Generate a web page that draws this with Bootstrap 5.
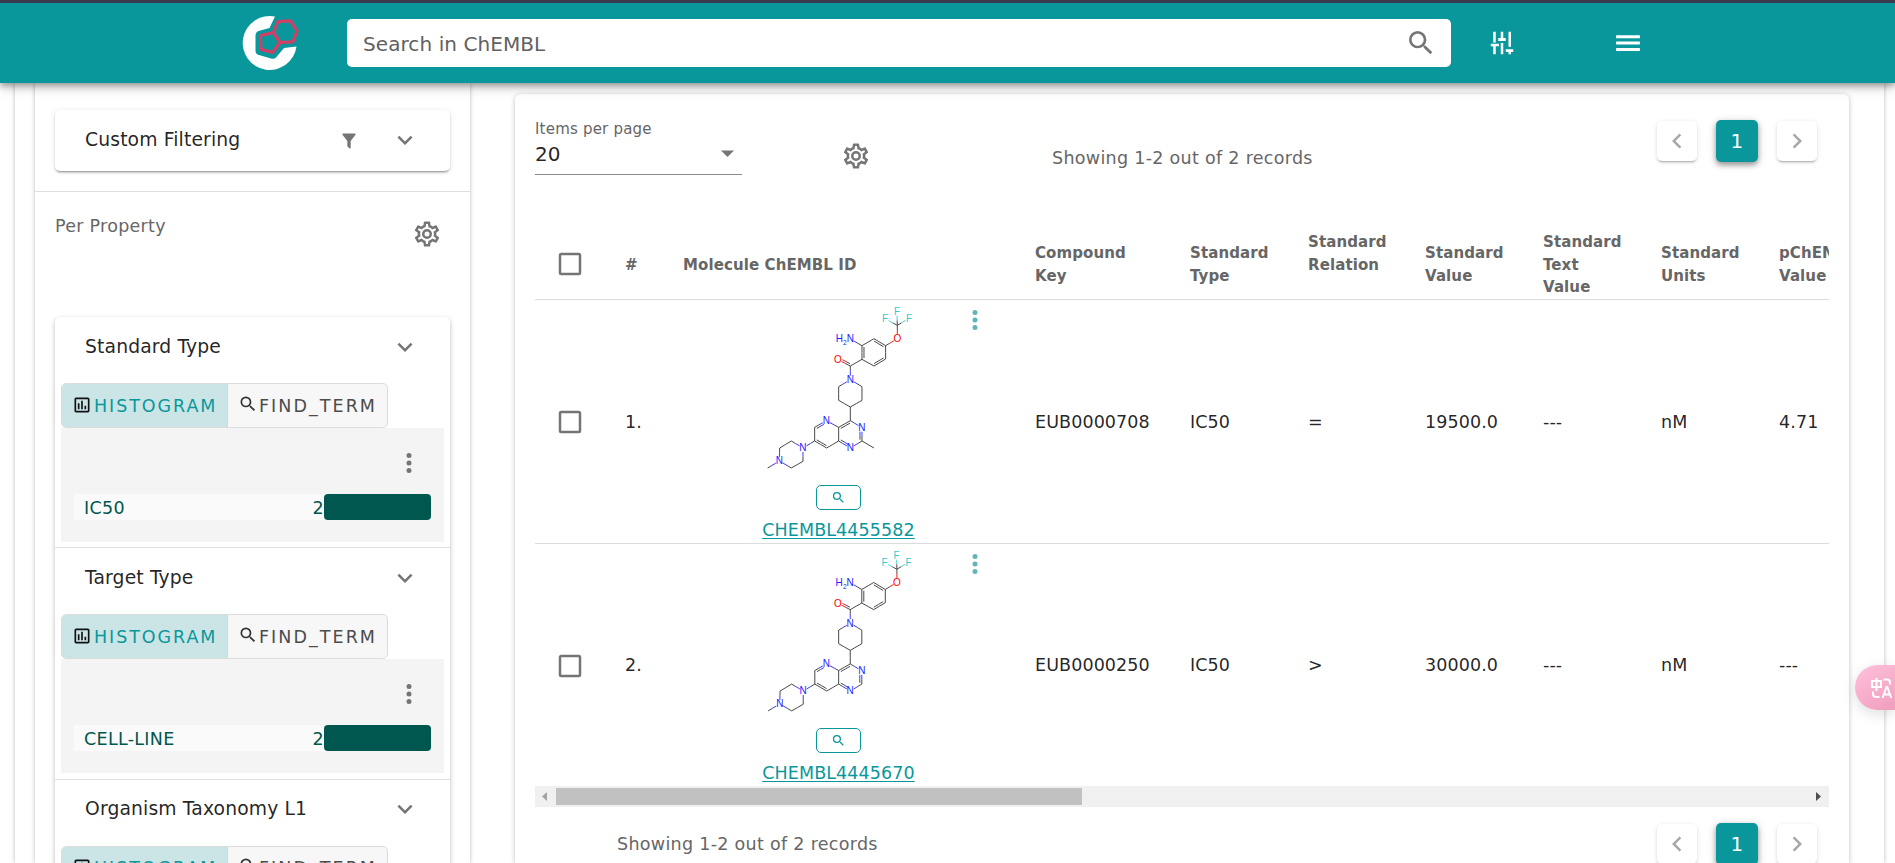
<!DOCTYPE html>
<html lang="en">
<head>
<meta charset="utf-8">
<title>ChEMBL - Activities</title>
<link rel="stylesheet" href="https://cdn.jsdelivr.net/npm/bootstrap@5.3.0/dist/css/bootstrap.min.css">
<style>
:root{--teal:#09979b;--deep:#00574f}
html,body{height:863px;overflow:hidden}
body{font-family:"DejaVu Sans",sans-serif;font-size:17.5px;color:rgba(0,0,0,.87);background:#fff;letter-spacing:.1px}
svg{flex:none;display:block;fill:currentColor}
.grey{color:#666}
.icon-grey{color:#757575}
.topbar{height:83px;border-top:3px solid #3b3b4f;background:var(--teal);box-shadow:0 3px 6px rgba(0,0,0,.3),0 5px 12px rgba(0,0,0,.16);z-index:5;color:#fff}
.logo{width:58px;height:56px;margin-left:241px;margin-right:48px}
.searchbox{width:1104px;height:48px;border-radius:5px;font-size:20px;line-height:48px;padding:2px 14px 0 16px;color:#616161;letter-spacing:.08px}
.outer{margin:0 11px 0 15px;height:780px;box-shadow:0 0 4px rgba(0,0,0,.28)}
.side{width:435px;margin-left:20px;height:780px;box-shadow:0 0 4px rgba(0,0,0,.28)}
.filtercard{height:61px;margin:27px 20px 0;border-radius:5px;box-shadow:0 3px 1px -2px rgba(0,0,0,.2),0 2px 2px rgba(0,0,0,.14),0 1px 5px rgba(0,0,0,.12)}
.ttl{font-size:18.75px;padding:0 30px;letter-spacing:.13px}
.rule{height:1px;background:#dedede}
.prop{height:125px;padding:20px 28px 0 20px}
.facets{margin:0 20px;border-radius:5px;box-shadow:0 2px 5px rgba(0,0,0,.28)}
.facet{height:231.25px;border-bottom:1px solid #dedede;padding:0 6px}
.facet .ttl{height:59px;margin:0 -6px 7px;padding-top:1px}
.tabset{height:45px;width:327px;border:1px solid #dcdcdc;border-radius:5px;overflow:hidden;letter-spacing:1.93px;background:#f7f7f7;color:#4c4c4c;white-space:nowrap}
.tab-a{width:166px;background:#cbe5e6;color:var(--teal);border-right:1px solid #d3d9d9;padding:1px 0 0 10px}
.tab-b{padding:1px 0 0 10px;letter-spacing:2.05px}
.hist{height:114px;background:#f4f4f4;padding:20px 13px 0}
.hrow{height:26px;margin-top:16px;color:var(--deep);line-height:28px}
.track{width:250px;background:#fafafa;padding:0 0 0 10px;letter-spacing:.3px}
.bar{width:107px;background:var(--deep);border-radius:4px}
.results{width:1334px;margin-left:45px;margin-top:11px;height:769px;border-radius:6px 6px 0 0;background:#fff;box-shadow:0 1px 5px rgba(0,0,0,.26);padding:0 20px}
.tools{height:102px}
.perpage{width:207px;margin-top:25px;height:56px;border-bottom:1px solid #8a8a8a}
.perpage .lbl{font-size:15px;line-height:20px;color:#666;letter-spacing:.2px}
.perpage .val{font-size:20px;line-height:30px;padding-right:8px}
.count{letter-spacing:.3px}
.pg{width:40px;height:40px;border-radius:5px;background:#fff;color:#a8a8a8;box-shadow:0 3px 1px -2px rgba(0,0,0,.15),0 2px 2px rgba(0,0,0,.1),0 1px 5px rgba(0,0,0,.1)}
.pg-on{width:42px;height:42px;background:var(--teal);color:#fff;font-size:20px;box-shadow:0 3px 5px rgba(0,0,0,.3),0 2px 10px rgba(0,0,0,.2)}
.grid{table-layout:fixed;width:1375px;border-collapse:separate;border-spacing:0;margin:0}
.gridwrap{overflow:hidden;height:590px}
.grid th{font-size:15px;line-height:22.5px;font-weight:700;color:#666;padding:35px 0 0 20px;height:103.5px;border-bottom:1px solid #dcdcdc;vertical-align:middle;letter-spacing:.1px}
.grid th svg{margin-top:-1px}
.grid td{padding:1px 0 0 20px;height:243.5px;border-bottom:1px solid #dcdcdc;vertical-align:middle}
.grid .molcell{padding:5px 1px 0 0;vertical-align:top;position:relative}
.molcell .menu{position:absolute;left:297px;top:5px;color:#5fb5ba}
.zoombtn{width:45px;height:25px;border:1px solid var(--teal);border-radius:5px;margin:10px auto 0;color:var(--teal)}
.molcell a{color:var(--teal);line-height:24px;text-underline-offset:2px}
.mol{margin:0 auto}
.mol text{font-family:"Liberation Sans",sans-serif;font-size:30px;letter-spacing:0}
.sbar{height:21px;background:#f0f0f0}
.thumb{width:526px;height:17px;background:#c1c1c1}
.pill{position:fixed;right:0;top:665px;width:40px;height:45px;border-radius:23px 0 0 23px;background:linear-gradient(150deg,rgba(254,190,218,.96),rgba(240,152,186,.94));box-shadow:0 4px 14px rgba(0,0,0,.13);z-index:9;color:#fff;padding-left:15px}
</style>
</head>
<body>
<svg class="d-none">
<symbol id="chev" viewBox="0 0 24 24"><path d="M7.41 8.58L12 13.17l4.59-4.59L18 10l-6 6-6-6z"/></symbol>
<symbol id="left" viewBox="0 0 24 24"><path d="M15.41 16.58L10.83 12l4.58-4.59L14 6l-6 6 6 6z"/></symbol>
<symbol id="right" viewBox="0 0 24 24"><path d="M8.59 16.58L13.17 12 8.59 7.41 10 6l6 6-6 6z"/></symbol>
<symbol id="mag" viewBox="0 0 24 24"><path d="M9.5 3A6.5 6.5 0 0 1 16 9.5c0 1.61-.59 3.09-1.56 4.23l.27.27h.79l5 5-1.5 1.5-5-5v-.79l-.27-.27A6.516 6.516 0 0 1 9.5 16 6.5 6.5 0 0 1 9.5 3m0 2C7 5 5 7 5 9.5S7 14 9.5 14 14 12 14 9.5 12 5 9.5 5z"/></symbol>
<symbol id="dots" viewBox="0 0 24 24"><path d="M12 16a2 2 0 1 1 0 4 2 2 0 0 1 0-4m0-6a2 2 0 1 1 0 4 2 2 0 0 1 0-4m0-6a2 2 0 1 1 0 4 2 2 0 0 1 0-4z"/></symbol>
<symbol id="box" viewBox="0 0 24 24"><path d="M19 3H5a2 2 0 0 0-2 2v14a2 2 0 0 0 2 2h14a2 2 0 0 0 2-2V5a2 2 0 0 0-2-2m0 16H5V5h14v14z"/></symbol>
<symbol id="chart" viewBox="0 0 24 24"><path d="M9 17H7v-7h2v7m4 0h-2V7h2v10m4 0h-2v-4h2v4m2 2H5V5h14v14.1M19 3H5c-1.1 0-2 .9-2 2v14c0 1.1.9 2 2 2h14c1.100 0 2-.9 2-2V5c0-1.100-.9-2-2-2z"/></symbol>
<symbol id="cog" viewBox="0 0 24 24"><path d="M12 8a4 4 0 0 1 4 4 4 4 0 0 1-4 4 4 4 0 0 1-4-4 4 4 0 0 1 4-4m0 2a2 2 0 0 0-2 2 2 2 0 0 0 2 2 2 2 0 0 0 2-2 2 2 0 0 0-2-2m-2 12c-.25 0-.46-.18-.5-.42l-.37-2.650c-.63-.25-1.170-.59-1.690-.99l-2.490 1.010c-.22.08-.49 0-.61-.22l-2-3.460c-.13-.22-.07-.49.12-.64l2.110-1.660L4.500 12l.07-1-2.110-1.630c-.19-.15-.25-.42-.12-.64l2-3.460c.12-.22.39-.31.61-.22l2.490 1c.52-.39 1.060-.73 1.690-.98l.37-2.650c.04-.24.25-.42.500-.42h4c.25 0 .46.18.500.42l.37 2.650c.63.25 1.170.59 1.690.98l2.490-1c.22-.09.49 0 .61.22l2 3.460c.13.22.07.49-.12.64L19.430 11l.07 1-.07 1 2.110 1.630c.19.150.25.42.12.64l-2 3.460c-.12.22-.39.31-.61.22l-2.490-1c-.52.39-1.060.73-1.690.98l-.37 2.650c-.04.24-.25.42-.500.42h-4m1.250-18l-.37 2.610c-1.200.25-2.260.89-3.030 1.780L5.440 7.350l-.75 1.300L6.800 10.200a5.550 5.550 0 0 0 0 3.600l-2.120 1.560.75 1.300 2.430-1.040c.77.88 1.820 1.520 3.010 1.760l.37 2.620h1.520l.37-2.610c1.190-.25 2.240-.89 3.010-1.770l2.430 1.040.75-1.300-2.120-1.550c.4-1.170.4-2.440 0-3.610l2.110-1.550-.75-1.300-2.410 1.040c-.77-.89-1.830-1.530-3.030-1.770L12.750 4h-1.500z"/></symbol>
</svg>

<header class="topbar d-flex align-items-center position-relative">
  <svg class="logo" viewBox="241 15 58 56">
    <path fill="#fff" d="M275 16.500A27 27 0 1 0 296.500 46.500L284 48L276 57.500Q274 59.500 271 58.500L259 55Q255.500 54 255.500 51V35.500Q255.500 32 258.500 31L269.500 28Z"/>
    <g fill="none" stroke="#d23f64" stroke-width="3.200" stroke-linejoin="round"><path d="M260.500 35.500L273.500 32.500L280 42.500L272.500 52.500L260.800 49.200Z"/><path d="M273.500 32.500L278 21.500L290.500 20.800L297 31L293 41.800L280 42.500Z"/></g>
  </svg>
  <div class="searchbox bg-white d-flex justify-content-between align-items-center"><span>Search in ChEMBL</span>
    <svg width="32" height="32" viewBox="0 0 24 24" class="icon-grey" style="margin-top:-3px"><use href="#mag"/></svg></div>
  <svg width="30" height="30" viewBox="0 0 24 24" style="margin-left:36px"><path d="M5 3h2v8.500H5zm-2 9.500h6.500v2H7V21H5v-6.500H3zM11 3h2v5h2v2.300H9V8h2zm0 9h2v9h-2zM17.200 3h2v12h-2zM15 17h6v2.200h-1.800V21h-2v-1.800H15z"/></svg>
  <svg width="30" height="30" viewBox="0 0 24 24" style="margin-left:96px"><path d="M2.500 5.700h19v2.400h-19zm0 5.100h19v2.400h-19zm0 5.200h19v2.400h-19z"/></svg>
</header>

<main class="outer d-flex">
  <aside class="side">
    <div class="filtercard ttl d-flex align-items-center"><span class="flex-grow-1">Custom Filtering</span>
      <svg class="icon-grey" width="20" height="20" viewBox="0 0 24 24"><path d="M14 12v7.880c.04.300-.06.620-.29.830-.39.390-1.020.390-1.410 0L10.290 18.700c-.23-.23-.33-.54-.29-.83V12h-.03L4.210 4.620c-.34-.43-.26-1.060.17-1.400C4.570 3.080 4.780 3 5 3h14c.22 0 .43.080.62.220.43.340.51.970.17 1.400L14.030 12z"/></svg>
      <svg class="icon-grey" style="margin:-1px 0 0 31px" width="30" height="30"><use href="#chev"/></svg>
    </div>
    <div class="rule" style="margin-top:20px"></div>
    <div class="prop d-flex justify-content-between align-items-start"><span class="grey" style="line-height:29px;letter-spacing:.28px">Per Property</span>
      <svg class="icon-grey" style="margin-top:7px" width="30" height="30"><use href="#cog"/></svg></div>
    <div class="facets" id="facets"></div>
  </aside>

  <section class="results">
    <div class="tools d-flex align-items-start">
      <div class="perpage"><div class="lbl">Items per page</div>
        <div class="val d-flex justify-content-between align-items-center"><span>20</span><svg class="icon-grey" width="13" height="7" viewBox="0 0 13 7" style="margin-top:-2px"><path d="M0 .5h13L6.500 7z"/></svg></div></div>
      <svg class="icon-grey" style="margin:47px 0 0 99px" width="30" height="30"><use href="#cog"/></svg>
      <span class="grey count" style="margin:49px 0 0 181px;line-height:31px">Showing 1-2 out of 2 records</span>
      <div class="d-flex align-items-center ms-auto" style="margin:26px 12px 0 0;gap:19px">
        <span class="pg d-flex align-items-center justify-content-center"><svg width="30" height="30"><use href="#left"/></svg></span>
        <span class="pg pg-on d-flex align-items-center justify-content-center">1</span>
        <span class="pg d-flex align-items-center justify-content-center"><svg width="30" height="30"><use href="#right"/></svg></span>
      </div>
    </div>
    <div class="gridwrap">
      <table class="grid">
        <colgroup><col style="width:70px"><col style="width:58px"><col style="width:352px"><col style="width:155px"><col style="width:118px"><col style="width:117px"><col style="width:118px"><col style="width:118px"><col style="width:118px"><col></colgroup>
        <thead><tr><th><svg class="icon-grey" width="30" height="30"><use href="#box"/></svg></th><th>#</th><th>Molecule ChEMBL ID</th><th>Compound<br>Key</th><th>Standard<br>Type</th><th>Standard<br>Relation<br>&nbsp;</th><th>Standard<br>Value</th><th>Standard<br>Text<br>Value</th><th>Standard<br>Units</th><th>pChEMBL<br>Value</th></tr></thead>
        <tbody id="rows"></tbody>
      </table>
    </div>
    <div class="sbar d-flex align-items-center"><svg style="margin-left:7px" width="5" height="9" viewBox="0 0 5 9"><path fill="#a3a3a3" d="M5 0v9L0 4.500z"/></svg><div class="thumb flex-shrink-0" style="margin-left:9px"></div><svg class="ms-auto" style="margin-right:8px" width="5" height="9" viewBox="0 0 5 9"><path fill="#505050" d="M0 0v9l5-4.500z"/></svg></div>
    <div class="d-flex align-items-start" style="padding:16px 12px 0 82px">
      <span class="grey count" style="line-height:31px;margin-top:6px">Showing 1-2 out of 2 records</span>
      <div class="d-flex align-items-center ms-auto" style="gap:19px">
        <span class="pg d-flex align-items-center justify-content-center"><svg width="30" height="30"><use href="#left"/></svg></span>
        <span class="pg pg-on d-flex align-items-center justify-content-center">1</span>
        <span class="pg d-flex align-items-center justify-content-center"><svg width="30" height="30"><use href="#right"/></svg></span>
      </div>
    </div>
  </section>
</main>
<div class="pill d-flex align-items-center"><svg width="23" height="24" viewBox="0 0 23 24" fill="none" stroke="currentColor" stroke-width="2"><path fill="none" d="M2 5h9v6H2zM6.500 2v13M13.500 3.500h3.500q3 0 3 3v2M3 15.500v2.500q0 3 3 3h3.500M12.500 22l4-11h.8l4 11M14 18.500h6"/></svg></div>

<script src="https://cdn.jsdelivr.net/npm/bootstrap@5.3.0/dist/js/bootstrap.bundle.min.js"></script>
<script>
const facets=[["Standard Type","IC50",2],["Target Type","CELL-LINE",2],["Organism Taxonomy L1"]];
document.getElementById("facets").innerHTML=facets.map(([t,k,n])=>`
<div class="facet"><div class="ttl d-flex align-items-center justify-content-between"><span>${t}</span><svg class="icon-grey" width="30" height="30" style="margin-top:-1px"><use href="#chev"/></svg></div>
<div class="tabset d-flex"><div class="tab-a d-flex align-items-center"><svg width="20" height="20" style="color:#111;margin:-3px 2px 0 0"><use href="#chart"/></svg>HISTOGRAM</div>
<div class="tab-b d-flex align-items-center"><svg width="20" height="20" style="color:#333;margin:-5px 1px 0 0"><use href="#mag"/></svg>FIND_TERM</div></div>
${k?`<div class="hist"><svg class="icon-grey ms-auto" style="margin-right:7.5px" width="30" height="30"><use href="#dots"/></svg>
<div class="hrow d-flex"><div class="track d-flex justify-content-between"><span>${k}</span><span>${n}</span></div><div class="bar"></div></div></div>`:""}</div>`).join("");

// Skeletal formula: atom = [x, y, element]; bond = [from, to, side of the second line or 0]
const atoms=[[470,50,"F"],[434,71,"F"],[506,70,"F"],[471,91],[471,131,"O"],[436,152],[401,131],[365,152],[365,193],[401,213],[436,192],[330,132,"N"],[330,213],[293,194,"O"],[330,254,"N"],[365,275],[365,316],[330,336],[295,316],[295,275],[330,377],[365,398,"N"],[365,438],[330,459,"N"],[295,438],[295,397],[258,377,"N"],[223,397],[223,438],[259,459],[188,459,"N"],[153,438],[118,459],[117,498,"N"],[153,519],[188,499],[82,519],[401,459]];
const bonds=[[0,3,0],[1,3,0],[2,3,0],[3,4,0],[4,5,0],[5,6,-1],[6,7,0],[7,8,-1],[8,9,0],[9,10,-1],[10,5,0],[7,11,0],[8,12,0],[12,13,1],[12,14,0],[14,15,0],[15,16,0],[16,17,0],[17,18,0],[18,19,0],[19,14,0],[17,20,0],[20,21,0],[21,22,1],[22,23,0],[23,24,1],[24,25,0],[25,20,1],[25,26,0],[26,27,-1],[27,28,0],[28,29,-1],[29,24,0],[28,30,0],[30,31,0],[31,32,0],[32,33,0],[33,34,0],[34,35,0],[35,30,0],[33,36,0]];
const tint={F:"#33cccc",O:"#f00",N:"#2222ff"};
function molecule(methyl,k){
  const y0=30,at=atoms.map(a=>[295+(a[0]-295)*k,y0+20+(a[1]-50)*k,a[2]]);
  const bs=methyl?bonds.concat([[22,37,0]]):bonds;let s="";
  const seg=(a,b,c)=>`<path stroke="${c}" d="M${a[0].toFixed(1)} ${a[1].toFixed(1)}L${b[0].toFixed(1)} ${b[1].toFixed(1)}"/>`;
  for(const [i,j,d] of bs){
    const dx=at[j][0]-at[i][0],dy=at[j][1]-at[i][1],l=Math.hypot(dx,dy),ux=dx/l,uy=dy/l;
    for(let q=0;q<(d?2:1);q++){
      const o=q?6*d:0,t=q?4:0,p=at[i][2]?12:t,r=at[j][2]?12:t;
      const a=[at[i][0]+ux*p-uy*o,at[i][1]+uy*p+ux*o],b=[at[j][0]-ux*r-uy*o,at[j][1]-uy*r+ux*o],m=[(a[0]+b[0])/2,(a[1]+b[1])/2];
      s+=seg(a,m,tint[at[i][2]]||"#333")+seg(m,b,tint[at[j][2]]||"#333");
    }}
  for(const [x,y,e] of at) if(e) s+=`<text x="${x}" y="${y+10}" text-anchor="middle" fill="${tint[e]}">${e}</text>`;
  const n=at[11];
  s+=`<text x="${n[0]-33}" y="${n[1]+10}" text-anchor="middle" fill="${tint.N}">H</text><text x="${n[0]-16}" y="${n[1]+18}" text-anchor="middle" fill="${tint.N}" style="font-size:20px">2</text>`;
  return `<svg class="mol" width="163.300" height="170" viewBox="50 30 490 510" stroke-width="2.700">${s}</svg>`;
}
const data=[["1.","CHEMBL4455582","EUB0000708","=","19500.0","4.71",true,1],["2.","CHEMBL4445670","EUB0000250",">","30000.0","---",false,.993]];
document.getElementById("rows").innerHTML=data.map((r,i)=>`<tr><td><svg class="icon-grey" width="30" height="30"><use href="#box"/></svg></td><td>${r[0]}</td>
<td class="molcell text-center">${molecule(r[6],r[7])}<svg class="menu" width="30" height="30"><use href="#dots"/></svg><div class="zoombtn d-flex align-items-center justify-content-center"${i?' style="margin-top:9px"':''}><svg width="15" height="15"><use href="#mag"/></svg></div><div style="margin-top:7px"><a href="#">${r[1]}</a></div></td>
<td>${r[2]}</td><td>IC50</td><td>${r[3]}</td><td>${r[4]}</td><td>---</td><td>nM</td><td>${r[5]}</td></tr>`).join("");
</script>
</body>
</html>
